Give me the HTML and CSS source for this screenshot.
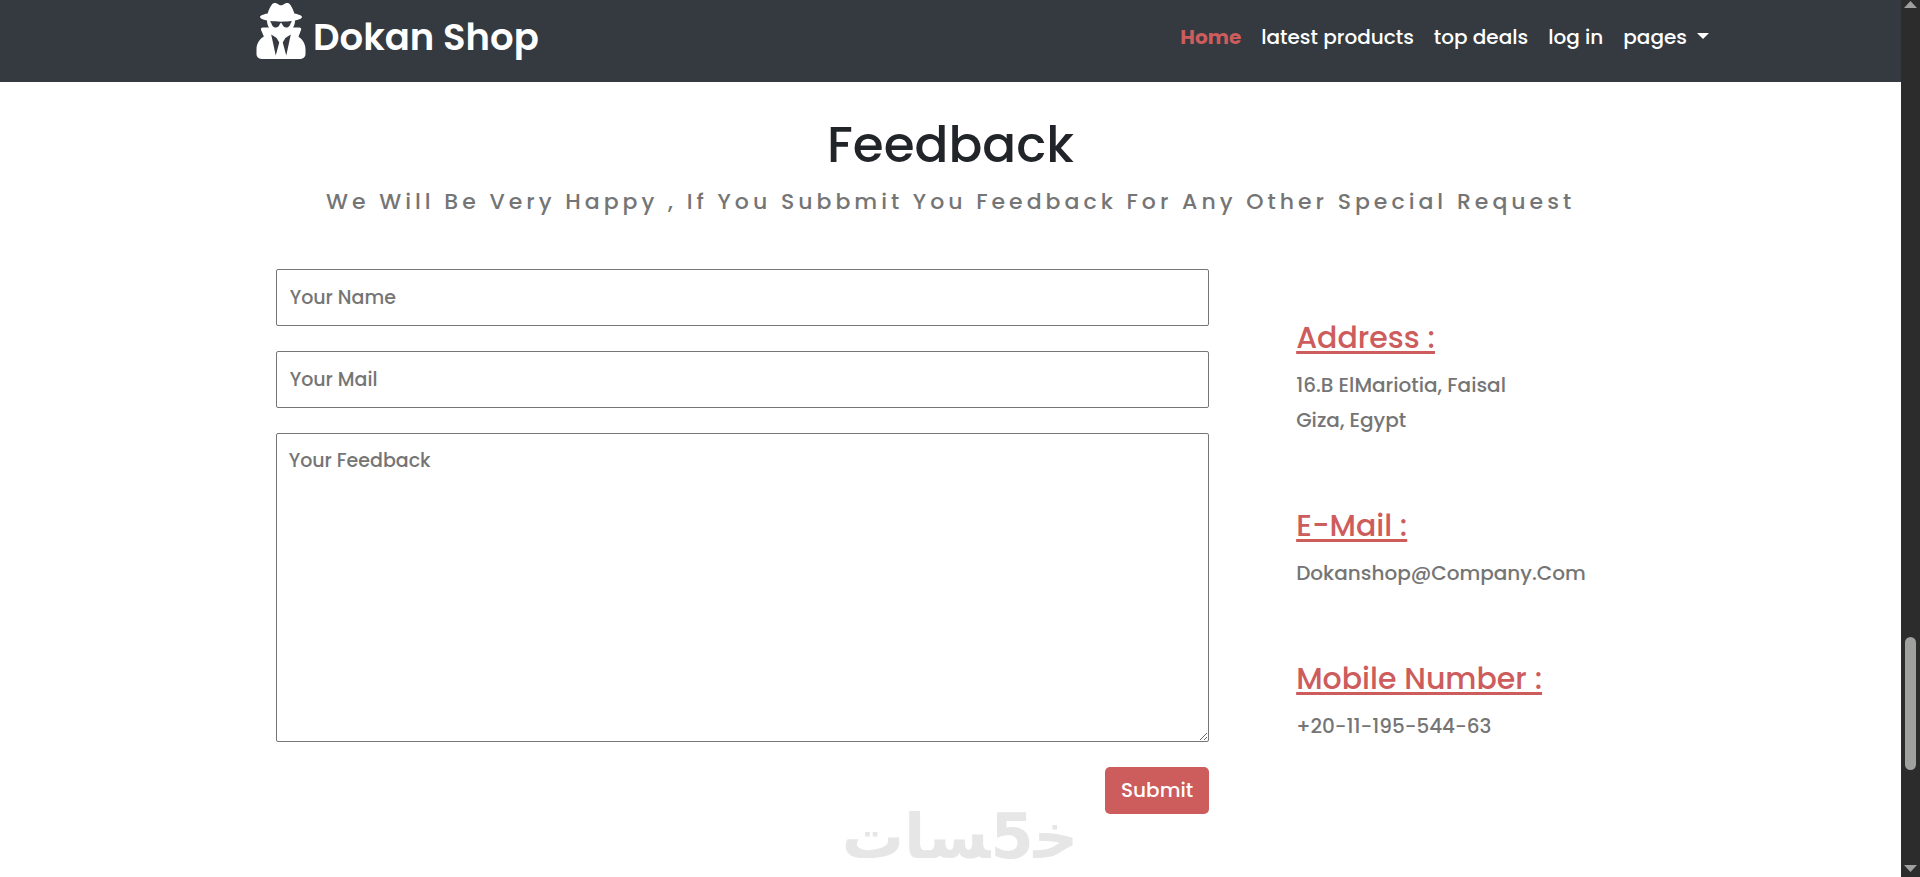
FILE: index.html
```html
<!DOCTYPE html>
<html lang="en">
<head>
<meta charset="utf-8">
<meta name="viewport" content="width=device-width, initial-scale=1">
<title>Dokan Shop</title>
<link rel="stylesheet" href="styles.css">
</head>
<body>
<div class="page">
  <header class="navbar">
    <a class="brand" href="#">
      <svg class="brand-icon" viewBox="0 0 448 512" aria-hidden="true"><path d="M383.9 308.3l23.9-62.6c4-10.5-3.7-21.7-15-21.7h-58.5c11-18.9 17.8-40.6 17.8-64v-.3c39.2-7.8 64-19.1 64-31.7 0-13.3-27.3-25.1-70.1-33-9.2-32.8-27-65.8-40.6-82.8-9.5-11.9-25.9-15.6-39.5-8.8l-27.6 13.8c-9 4.5-19.6 4.5-28.6 0L182.1 3.4c-13.6-6.8-30-3.1-39.5 8.8-13.5 17-31.4 50-40.6 82.8-42.7 7.9-70 19.7-70 33 0 12.6 24.8 23.9 64 31.7v.3c0 23.4 6.8 45.1 17.8 64H56.3c-11.5 0-19.2 11.7-14.7 22.3l25.8 60.2C27.3 329.8 0 372.7 0 422.4v44.8C0 491.9 20.1 512 44.8 512h358.4c24.7 0 44.8-20.1 44.8-44.8v-44.8c0-48.4-25.8-90.4-64.1-114.1zM176 480l-41.6-192 49.6 32 24 40-32 120zm96 0l-32-120 24-40 49.6-32L272 480zm41.7-298.5c-3.9 11.9-7 24.6-16.5 33.4-10.1 9.3-48 22.4-64-25-2.8-8.4-15.4-8.4-18.3 0-17 50.2-56 32.4-64 25-9.5-8.8-12.7-21.5-16.5-33.4-.8-2.5-6.3-5.7-6.3-5.8v-10.8c28.3 3.6 61 5.8 96 5.8s67.7-2.1 96-5.8v10.8c-.1.1-5.6 3.2-6.4 5.8z"/></svg>
      <span>Dokan Shop</span>
    </a>
    <nav class="nav-links">
      <a class="nav-link active" href="#">Home</a>
      <a class="nav-link" href="#">latest products</a>
      <a class="nav-link" href="#">top deals</a>
      <a class="nav-link" href="#">log in</a>
      <a class="nav-link dropdown" href="#">pages</a>
    </nav>
  </header>
  <main class="feedback">
    <h1 class="title">Feedback</h1>
    <p class="subtitle">We Will Be Very Happy , If You Subbmit You Feedback For Any Other Special Request</p>
    <div class="columns">
      <form class="form">
        <input class="field" type="text" placeholder="Your Name" aria-label="Your Name">
        <input class="field" type="email" placeholder="Your Mail" aria-label="Your Mail">
        <textarea class="field message" placeholder="Your Feedback" aria-label="Your Feedback"></textarea>
        <button class="submit" type="submit">Submit</button>
      </form>
      <address class="contact">
        <section>
          <h2 class="contact-title">Address :</h2>
          <p class="contact-text">16.B ElMariotia, Faisal<br>Giza, Egypt</p>
        </section>
        <section>
          <h2 class="contact-title">E-Mail :</h2>
          <p class="contact-text">Dokanshop@Company.Com</p>
        </section>
        <section>
          <h2 class="contact-title">Mobile Number :</h2>
          <p class="contact-text">+20-11-195-544-63</p>
        </section>
      </address>
    </div>
  </main>
</div>
<div class="scrollbar" aria-hidden="true">
  <svg class="arrow" viewBox="0 0 13 7"><path d="M6.500 0L13 7H0z"/></svg>
  <div class="track"><div class="thumb"></div></div>
  <svg class="arrow" viewBox="0 0 13 7"><path d="M0 0h13L6.500 7z"/></svg>
</div>
<div class="watermark" dir="rtl" lang="ar"><span>خ&zwj;</span><span>5</span><span>&zwj;سات</span></div>
</body>
</html>
```
FILE: styles.css
```css
* { box-sizing: border-box; }

body {
  margin: 0;
  min-height: 100vh;
  display: flex;
  background: #fff;
  color: #212529;
  font-family: Poppins, Inter, "Liberation Sans", sans-serif;
  font-weight: 500;
}

.page { flex: 1; min-width: 0; }

.navbar {
  display: flex;
  justify-content: space-between;
  align-items: flex-start;
  height: 82px;
  padding: 3px 192px 0 256px;
  background: #343a40;
}

.brand {
  display: flex;
  gap: 7px;
  color: #fff;
  font-size: 37px;
  font-weight: 600;
  line-height: 68px;
  text-decoration: none;
}

.brand-icon { width: 50px; height: 56px; fill: currentColor; }

.nav-links { display: flex; gap: 20px; }

.nav-link {
  color: #fff;
  font-size: 20px;
  line-height: 68px;
  text-decoration: none;
}

.nav-link.active { color: #cd5c5c; font-weight: 700; }

.dropdown::after {
  content: "";
  display: inline-block;
  margin-left: 10px;
  vertical-align: 5px;
  border: 6px solid transparent;
  border-top-color: currentColor;
  border-bottom: 0;
}

.feedback { width: 71%; margin: 0 auto; padding: 33px 0 60px; }

.title {
  margin: 0;
  font-size: 50px;
  font-weight: 500;
  line-height: 60px;
  text-align: center;
}

.subtitle {
  margin: 9px 0 49px;
  color: #757575;
  font-size: 22px;
  line-height: 36px;
  letter-spacing: 4px;
  text-align: center;
}

.columns { display: grid; grid-template-columns: 933fr 329fr; gap: 87px; }

.form { display: flex; flex-direction: column; gap: 25px; }

.field {
  width: 100%;
  height: 57px;
  padding: 10px 13px;
  border: 1px solid #767676;
  border-radius: 2px;
  background: #fff;
  color: #212529;
  font: inherit;
  font-size: 19px;
}

.field::placeholder { color: #757575; }

.message { height: 309px; padding: 12px; }

.submit {
  align-self: flex-end;
  height: 47px;
  padding: 0 16px 2px;
  border: 0;
  border-radius: 5px;
  background: #cd5c5c;
  color: #fff;
  font: inherit;
  font-size: 20px;
}

.contact {
  display: flex;
  flex-direction: column;
  gap: 70px;
  padding-top: 51px;
  font-style: normal;
}

.contact-title {
  margin: 0 0 12px;
  color: #cd5c5c;
  font-size: 30px;
  font-weight: 500;
  line-height: 36px;
  text-decoration: underline;
  text-decoration-thickness: 3px;
  text-underline-offset: 3px;
  text-decoration-skip-ink: none;
}

.contact-text { margin: 0; color: #757575; font-size: 20px; line-height: 35px; }

.scrollbar {
  display: flex;
  flex-direction: column;
  align-items: center;
  width: 19px;
  padding: 1px 0 5px;
  background: #2c2c2c;
}

.arrow { width: 13px; height: 7px; fill: #9f9f9f; }

.track { flex: 1; padding-top: 629px; }

.thumb { width: 11px; height: 133px; border-radius: 6px; background: #9fa19f; }

.watermark {
  position: fixed;
  left: 50%;
  bottom: 4px;
  display: flex;
  transform: translateX(-50%);
  color: #e6e6e6;
  font-family: "DejaVu Sans", sans-serif;
  font-size: 62px;
  font-weight: 700;
  line-height: 72px;
  pointer-events: none;
}
```
